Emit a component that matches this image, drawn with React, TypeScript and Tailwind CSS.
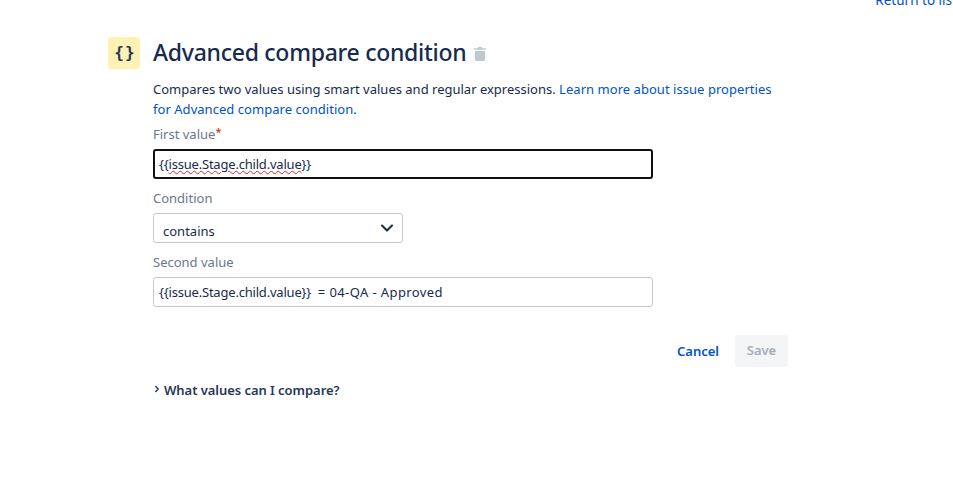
import React from "react";
import { ChevronDown, ChevronRight } from "lucide-react";

const font = "font-['Noto_Sans','Open_Sans',sans-serif]";

function TrashIcon() {
  return (
    <svg width="12" height="14" viewBox="0 0 12 14" className="ml-[8px] mt-[2px]">
      <path d="M4 0h4l.5 1.2H12v1.6H0V1.2h3.5z" fill="#c1c7d0" />
      <path d="M1 4h10v8.5c0 .8-.7 1.5-1.5 1.5h-7C1.7 14 1 13.3 1 12.5z" fill="#c1c7d0" />
    </svg>
  );
}

function FieldLabel({ children }: { children: React.ReactNode }) {
  return <div className="h-[20px] text-[13px] leading-[20px] text-[#6b778c]">{children}</div>;
}

export default function App() {
  return (
    <div className={`${font} h-[504px] w-[953px] overflow-hidden bg-white text-[#172b4d]`}>
      <div className="flex h-[8px] items-end justify-end pr-px">
        <a className="translate-y-[2px] text-[13.5px] leading-[20px] text-[#0052cc]">Return to lis</a>
      </div>

      <div className="flex pl-[108px] pt-[29px]">
        <div className="flex h-[32px] w-[32px] items-center justify-center rounded-[3px] bg-[#fff0b3]">
          <span className="pl-[2px] font-['DejaVu_Sans_Mono',monospace] text-[16px] font-bold leading-none tracking-[1px] text-[#253858]">{"{}"}</span>
        </div>
        <div className="ml-[13px] flex h-[32px] items-center">
          <h1 className="-mt-[2px] text-[23px] font-medium leading-[32px] tracking-[-0.27px] text-[#172b4d]">Advanced compare condition</h1>
          <TrashIcon />
        </div>
      </div>

      <div className="ml-[153px] w-[635px]">
        <p className="mt-[10px] w-[625px] text-[13px] leading-[20px] text-[#172b4d]">
          Compares two values using smart values and regular expressions.{" "}
          <a className="tracking-[0.04px] text-[#0052cc]">Learn more about issue properties for Advanced compare condition</a>.
        </p>

        <div className="mt-[5px]">
          <FieldLabel>
            First value<sup className="relative -top-[3px] text-[11px] text-[#bf2600]">*</sup>
          </FieldLabel>
        </div>
        <div className="mt-[5px] flex h-[30px] w-[500px] items-center rounded-[3px] border-2 border-[#111111] pl-[4px] text-[13px] tracking-[-0.2px]">
          <span className="translate-y-[1px]">
            {"{{"}
            <span className="underline decoration-[#e5231c] decoration-wavy decoration-1">issue.Stage.child.value</span>
            {"}}"}
          </span>
        </div>

        <div className="mt-[9px]">
          <FieldLabel>Condition</FieldLabel>
        </div>
        <div className="mt-[5px] flex h-[30px] w-[250px] items-center justify-between rounded-[3px] border border-[#c1c7d0] pl-[9px] pr-[5px] text-[13px]">
          <span className="mt-[7px]">contains</span>
          <ChevronDown size={20} strokeWidth={2.5} className="text-[#172b4d]" />
        </div>

        <div className="mt-[9px]">
          <FieldLabel>Second value</FieldLabel>
        </div>
        <div className="mt-[5px] flex h-[30px] w-[500px] items-center rounded-[3px] border border-[#c1c7d0] pl-[5px] text-[13px]">
          <span className="translate-y-[1px] whitespace-pre">
            <span className="tracking-[-0.2px]">{"{{issue.Stage.child.value}}"}</span>
            <span className="ml-[3px] tracking-[0.4px]">{" = 04-QA - Approved"}</span>
          </span>
        </div>

        <div className="mt-[28px] flex items-center justify-end">
          <button className="pt-[1px] text-[13px] font-semibold text-[#0052cc]">Cancel</button>
          <button className="ml-[16px] h-[32px] w-[53px] rounded-[3px] bg-[#f4f5f7] text-[13px] font-semibold text-[#a5adba]">Save</button>
        </div>

        <div className="mt-[13px] flex items-center">
          <ChevronRight size={10} strokeWidth={3} className="-mt-[3px] -ml-[1px] text-[#172b4d]" />
          <span className="ml-[2px] text-[13px] font-semibold leading-[20px] tracking-[-0.05px] text-[#253858]">What values can I compare?</span>
        </div>
      </div>
    </div>
  );
}
